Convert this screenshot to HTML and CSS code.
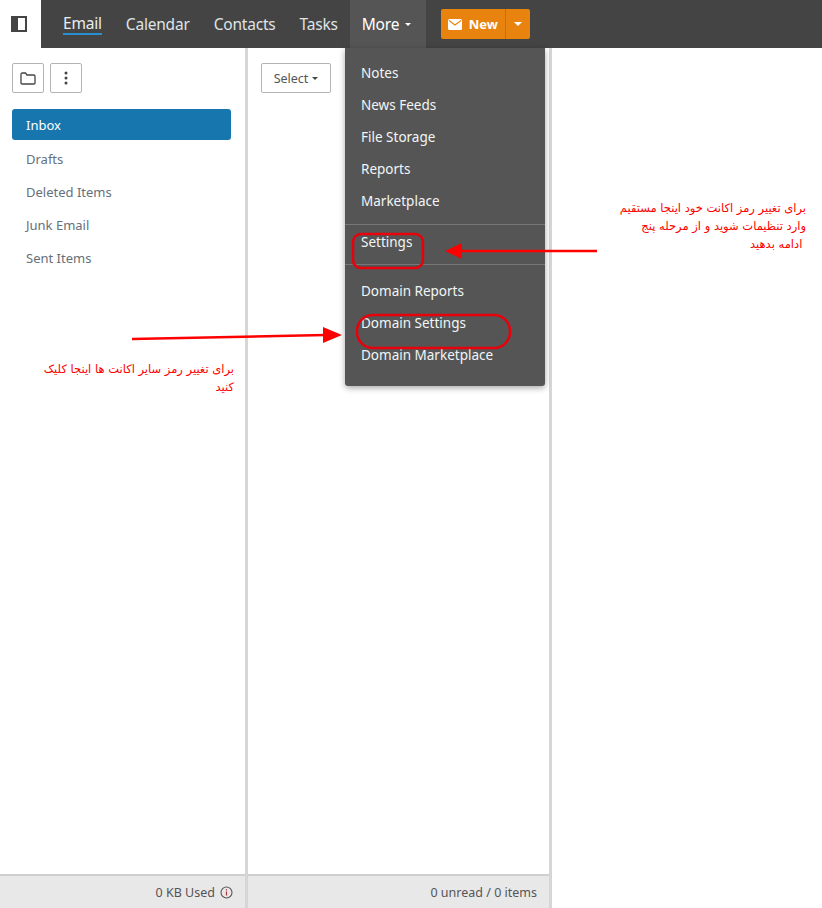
FILE: index.html
```html
<!DOCTYPE html>
<html lang="en">
<head>
<meta charset="utf-8">
<title>Email</title>
<link rel="stylesheet" href="styles.css">
</head>
<body>
<div class="app">
  <header class="topbar">
    <div class="toggle">
      <svg width="16" height="16" viewBox="0 0 16 16"><rect x="1" y="1" width="14" height="14" fill="#fff" stroke="#444" stroke-width="2"/><rect x="1" y="1" width="6" height="14" fill="#444"/></svg>
    </div>
    <nav class="tabs">
      <a class="tab"><span class="current">Email</span></a>
      <a class="tab">Calendar</a>
      <a class="tab">Contacts</a>
      <a class="tab">Tasks</a>
      <a class="tab more">More <i class="caret caret-light"></i></a>
    </nav>
    <div class="newbtn">
      <span class="new-main">
        <svg width="14" height="11" viewBox="0 0 14 11"><rect width="14" height="11" rx="1.5" fill="#fff"/><path d="M1 1.5 7 6l6-4.500" fill="none" stroke="#e8830f" stroke-width="1.100"/></svg>
        New
      </span>
      <span class="new-drop"><i class="caret caret-light caret-big"></i></span>
    </div>
  </header>
  <main class="panes">
    <section class="pane pane-folders">
      <div class="pane-body">
        <div class="tools">
          <button class="btn btn-icon">
            <svg width="16" height="13" viewBox="0 0 16 13"><path d="M1 11V2.200C1 1.500 1.500 1 2.200 1h3.300l1.500 2h6.800c.7 0 1.200.5 1.200 1.200V11c0 .6-.5 1-1.200 1H2.200C1.500 12 1 11.600 1 11Z" fill="none" stroke="#444" stroke-width="1.300"/></svg>
          </button>
          <button class="btn btn-icon">
            <svg width="4" height="14" viewBox="0 0 4 14"><circle cx="2" cy="2" r="1.500" fill="#444"/><circle cx="2" cy="7" r="1.500" fill="#444"/><circle cx="2" cy="12" r="1.500" fill="#444"/></svg>
          </button>
        </div>
        <ul class="folders">
          <li class="folder active">Inbox</li>
          <li class="folder">Drafts</li>
          <li class="folder">Deleted Items</li>
          <li class="folder">Junk Email</li>
          <li class="folder">Sent Items</li>
        </ul>
      </div>
      <footer class="status">0 KB Used
        <svg width="13" height="13" viewBox="0 0 13 13"><circle cx="6.500" cy="6.500" r="5.500" fill="none" stroke="#555" stroke-width="1.100"/><path d="M6.500 5.500v4M6.500 3.200v1.200" stroke="#a33" stroke-width="1.200"/></svg>
      </footer>
    </section>
    <section class="pane pane-list">
      <div class="pane-body">
        <button class="btn btn-select">Select <i class="caret caret-dark"></i></button>
      </div>
      <footer class="status">0 unread / 0 items</footer>
    </section>
    <section class="pane-read"></section>
  </main>
</div>

<div class="menu">
  <a class="menu-item">Notes</a>
  <a class="menu-item">News Feeds</a>
  <a class="menu-item">File Storage</a>
  <a class="menu-item">Reports</a>
  <a class="menu-item">Marketplace</a>
  <hr class="menu-sep">
  <a class="menu-item">Settings</a>
  <hr class="menu-sep">
  <a class="menu-item">Domain Reports</a>
  <a class="menu-item">Domain Settings</a>
  <a class="menu-item">Domain Marketplace</a>
</div>

<svg class="marks" width="822" height="908" viewBox="0 0 822 908">
  <rect x="353" y="234" width="70" height="34" rx="8" fill="none" stroke="#e8000a" stroke-width="2.500"/>
  <rect x="357" y="315" width="153" height="33" rx="16" fill="none" stroke="#e8000a" stroke-width="2.500"/>
  <path d="M597 251H460" stroke="#f00" stroke-width="2.500"/>
  <path d="M445 251 462 243V259Z" fill="#f00"/>
  <path d="M132 339 326 335" stroke="#f00" stroke-width="2.500"/>
  <path d="M342 335 323 327V343Z" fill="#f00"/>
</svg>

<p class="note note-right" dir="rtl">برای تغییر رمز اکانت خود اینجا مستقیم<br>وارد تنظیمات شوید و از مرحله پنج<br>&nbsp;ادامه بدهید</p>
<p class="note note-left" dir="rtl">برای تغییر رمز سایر اکانت ها اینجا کلیک<br>کنید</p>
</body>
</html>
```
FILE: styles.css
```css
* { box-sizing: border-box; }
html, body { margin: 0; height: 100%; }
body {
  font-family: "Noto Sans", "Open Sans", sans-serif;
  font-size: 14px;
  color: #555;
  background: #fff;
  overflow: hidden;
}
.app { display: flex; flex-direction: column; height: 908px; }

.topbar { display: flex; align-items: stretch; height: 48px; background: #444; flex: none; }
.toggle { width: 41px; background: #fff; display: flex; align-items: center; justify-content: center; padding-right: 3px; }
.tabs { display: flex; margin-left: 10px; }
.tab { display: flex; align-items: center; padding: 0 12px; color: #dfe3e6; font-size: 15.500px; letter-spacing: -0.200px; }
.current { color: #e8eef2; border-bottom: 2px solid #2a8fd0; line-height: 19px; margin-top: 1px; }
.more { background: #555; color: #fff; margin-left: 0; width: 76px; gap: 6px; white-space: nowrap; }
.caret { display: inline-block; width: 0; height: 0; border-style: solid; border-width: 3.500px 3.500px 0; border-color: transparent; }
.caret-light { border-top-color: #fff; }
.caret-dark { border-top-color: #444; margin-left: 4px; vertical-align: 2px; }
.caret-big { border-width: 4px 4.500px 0; }

.newbtn { display: flex; align-self: center; height: 30px; margin-left: 15px; border-radius: 2px; background: #e8830f; color: #fff; font-weight: 700; font-size: 13px; }
.new-main { width: 65px; display: flex; align-items: center; justify-content: center; gap: 7px; border-right: 1px solid #c76f08; }
.new-drop { width: 24px; display: flex; align-items: center; justify-content: center; }

.panes { flex: 1; display: flex; min-height: 0; }
.pane { display: flex; flex-direction: column; border-right: 3px solid #d6d6d6; }
.pane-folders { width: 248px; }
.pane-list { width: 304px; }
.pane-read { flex: 1; }
.pane-body { flex: 1; padding: 15px 12px 0; }
.pane-list .pane-body { padding-left: 13px; }

.status { height: 34px; display: flex; align-items: center; justify-content: flex-end; gap: 5px; background: #e8e8e8; border-top: 2px solid #cfcfcf; padding: 0 12px; font-size: 12.500px; color: #555; }

.btn { height: 30px; background: #fff; border: 1px solid #b4b4b4; border-radius: 2px; padding: 0; color: #555; font: inherit; display: inline-flex; align-items: center; justify-content: center; }
.btn-icon { width: 32px; }
.btn-select { width: 70px; font-size: 12.500px; }
.tools { display: flex; gap: 6px; }

.folders { list-style: none; margin: 16px 0 0; padding: 0; width: 219px; }
.folder { height: 33px; padding-left: 14px; display: flex; align-items: center; color: #66707a; font-size: 13px; }
.folder.active { height: 31px; margin-bottom: 2px; background: #1776ae; color: #fff; border-radius: 3px; }

.menu { position: absolute; left: 345px; top: 48px; width: 200px; height: 338px; padding: 9px 0 7px; background: #555; border-radius: 0 0 3px 3px; box-shadow: 0 2px 6px rgba(0,0,0,.35); }
.menu-item { display: flex; align-items: center; height: 32px; padding-left: 16px; color: #f2f5f7; font-size: 13.500px; }
.menu-sep { margin: 7px 0 1px; border: 0; border-top: 1px solid #767676; height: 0; }
.menu-sep + .menu-item + .menu-sep { margin: 6px 0 10px; }

.marks { position: absolute; left: 0; top: 0; pointer-events: none; }
.note { position: absolute; margin: 0; color: #f00; font-family: "DejaVu Sans", sans-serif; font-size: 11.500px; line-height: 18px; white-space: nowrap; text-align: right; }
.note-right { right: 16px; top: 199px; }
.note-left { left: 17px; width: 217px; top: 360px; }
```
